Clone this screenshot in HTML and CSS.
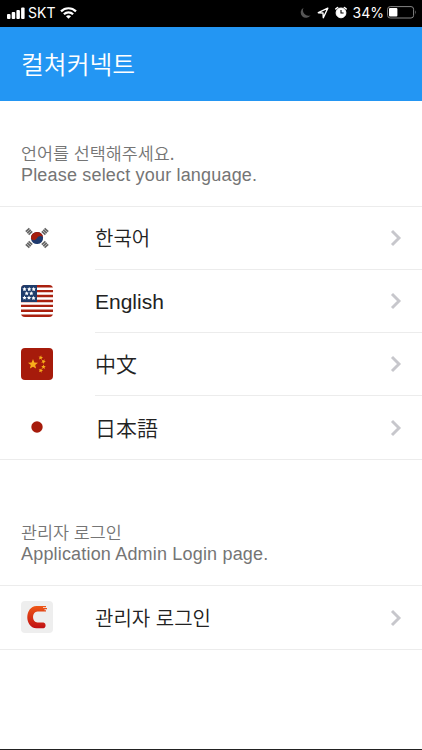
FILE: index.html
```html
<!DOCTYPE html>
<html lang="ko">

<head>
  <meta charset="UTF-8">
  <meta name="viewport" content="width=device-width, initial-scale=1.0">
  <title>컬쳐커넥트</title>
  <link rel="stylesheet" href="styles.css">
</head>

<body>
  <div class="status-bar">
    <div class="status-left">
      <svg class="signal" width="18" height="12" viewBox="0 0 18 12" fill="#fff">
        <rect x="0" y="7" width="3.5" height="5" rx="1" />
        <rect x="4.7" y="5" width="3.5" height="7" rx="1" />
        <rect x="9.4" y="3" width="3.5" height="9" rx="1" />
        <rect x="14.1" y="0.5" width="3.5" height="11.5" rx="1" />
      </svg>
      <span class="carrier">SKT</span>
      <svg class="wifi" width="17" height="12" viewBox="0 0 17 12" fill="none" stroke="#fff" stroke-width="2.2">
        <path d="M1 4.4C5.2 .2 11.8 .2 16 4.4" />
        <path d="M3.9 7.3C6.5 4.7 10.5 4.7 13.1 7.3" />
        <path d="M8.5 11.8L6 9.2C7.4 7.9 9.6 7.9 11 9.2Z" fill="#fff" stroke="none" />
      </svg>
    </div>
    <div class="status-right">
      <svg width="11" height="12" viewBox="0 0 11 12" fill="#555">
        <path d="M3.6 .8A5.3 5.3 0 1 0 10.6 8.2A5.4 5.4 0 0 1 3.6 .8Z" />
      </svg>
      <svg class="location" width="12" height="12" viewBox="0 0 12 12" fill="none" stroke="#fff" stroke-width="1.4" stroke-linejoin="round">
        <path d="M10.8 1.2L1.3 5.7L6 6L6.3 10.8Z" />
      </svg>
      <svg class="alarm" width="12" height="13" viewBox="0 0 12 13" fill="none" stroke="#fff">
        <circle cx="6" cy="6.9" r="4.9" fill="#fff" />
        <path d="M.9 2.9L2.6 1.5M11.1 2.9L9.4 1.5" stroke-width="1.6" stroke-linecap="round" />
        <path d="M6 4V7H8.6" stroke="#000" stroke-width="1.1" />
      </svg>
      <span class="percent">34%</span>
      <svg class="battery" width="30" height="13" viewBox="0 0 30 13">
        <rect x=".6" y=".6" width="26" height="11.4" rx="2.6" fill="none" stroke="#858585" />
        <rect x="2" y="2" width="8.4" height="8.6" rx="1" fill="#fff" />
        <path d="M28 4.2Q29.7 6.3 28 8.4Z" fill="#858585" />
      </svg>
    </div>
  </div>

  <header class="header">
    <h1>컬쳐커넥트</h1>
  </header>

  <section>
    <div class="section-title">
      <p class="ko">언어를 선택해주세요.</p>
      <p>Please select your language.</p>
    </div>
    <ul class="list">
      <li class="row">
        <svg class="icon" viewBox="0 0 32 32">
          <g transform="rotate(-5 16 16)">
            <circle cx="16" cy="16" r="6.1" fill="#1e3a6e" />
            <path d="M9.9 16A6.1 6.1 0 0 1 22.1 16C20.5 13.6 17.5 14 16 16C14.5 18.4 11.5 18.6 9.9 16Z" fill="#a51d0d" />
          </g>
          <g stroke="#666" stroke-width="1.7">
            <path d="M4.8 9.6L8.4 6.4M6.2 11.1L9.8 7.9M7.6 12.6L11.2 9.4" />
            <path d="M27.2 9.6L23.6 6.4M25.8 11.1L22.2 7.9M24.4 12.6L20.8 9.4" />
            <path d="M4.8 22.4L8.4 25.6M6.2 20.9L9.8 24.1M7.6 19.4L11.2 22.6" />
            <path d="M27.2 22.4L23.6 25.6M25.8 20.9L22.2 24.1M24.4 19.4L20.8 22.6" />
          </g>
        </svg>
        <div class="row-body">
          <span class="label ko">한국어</span>
          <svg class="chevron" viewBox="0 0 12 18"><path d="M2 2L9 9L2 16" /></svg>
        </div>
      </li>
      <li class="row">
        <svg class="icon rounded" viewBox="0 0 32 32">
          <rect width="32" height="32" fill="#fff" />
          <path d="M0 1.25H32M0 6.15H32M0 11.05H32M0 15.95H32M0 20.85H32M0 25.75H32M0 30.75H32" stroke="#a9200f" stroke-width="2.4" />
          <rect width="16" height="17" fill="#1f3c6b" />
          <g fill="#fff">
            <path id="star" d="M3.5 2L4.2 3.3L5.6 3.5L4.6 4.6L4.8 6L3.5 5.4L2.2 6L2.4 4.6L1.4 3.5L2.8 3.3Z" />
            <use href="#star" x="4.7" />
            <use href="#star" x="9.2" />
            <use href="#star" x="2.2" y="4.2" />
            <use href="#star" x="6.8" y="4.2" />
            <use href="#star" y="8.6" />
            <use href="#star" x="4.5" y="8.6" />
            <use href="#star" x="9" y="8.9" />
          </g>
        </svg>
        <div class="row-body">
          <span class="label">English</span>
          <svg class="chevron" viewBox="0 0 12 18"><path d="M2 2L9 9L2 16" /></svg>
        </div>
      </li>
      <li class="row">
        <svg class="icon rounded" viewBox="0 0 32 32">
          <rect width="32" height="32" fill="#a61b0b" />
          <g fill="#f8ae1b">
            <path id="cn-star" d="M12 11L13.4 14.4L17 14.7L14.2 17L15.1 20.6L12 18.7L8.9 20.6L9.8 17L7 14.7L10.6 14.4Z" />
            <use href="#cn-star" transform="translate(14.2 2.2) scale(.46) rotate(10 12 16)" />
            <use href="#cn-star" transform="translate(17 6) scale(.46) rotate(25 12 16)" />
            <use href="#cn-star" transform="translate(17 11.4) scale(.46)" />
            <use href="#cn-star" transform="translate(14.2 15) scale(.46) rotate(15 12 16)" />
          </g>
        </svg>
        <div class="row-body">
          <span class="label zh">中文</span>
          <svg class="chevron" viewBox="0 0 12 18"><path d="M2 2L9 9L2 16" /></svg>
        </div>
      </li>
      <li class="row">
        <svg class="icon" viewBox="0 0 32 32">
          <circle cx="16" cy="16" r="5.7" fill="#a61b0b" />
        </svg>
        <div class="row-body">
          <span class="label ja">日本語</span>
          <svg class="chevron" viewBox="0 0 12 18"><path d="M2 2L9 9L2 16" /></svg>
        </div>
      </li>
    </ul>
  </section>

  <section class="admin">
    <div class="section-title">
      <p class="ko">관리자 로그인</p>
      <p>Application Admin Login page.</p>
    </div>
    <ul class="list">
      <li class="row">
        <svg class="icon rounded" viewBox="0 0 32 32">
          <defs>
            <linearGradient id="magnet" x1="0" y1="0" x2="0" y2="1">
              <stop offset="0" stop-color="#ee5716" />
              <stop offset="1" stop-color="#c01014" />
            </linearGradient>
          </defs>
          <rect width="32" height="32" fill="#eee" />
          <path d="M15.5 5H25V6.2H22V7H26V8.3H23.5V9.2H25V10.4H16.5C10.5 10.8 10.5 21 16.5 21.5H22.5C25.3 22 25.3 27 22.5 27.3H15.5C3 26.5 3.5 5.5 15.5 5Z" fill="url(#magnet)" />
        </svg>
        <div class="row-body">
          <span class="label ko">관리자 로그인</span>
          <svg class="chevron" viewBox="0 0 12 18"><path d="M2 2L9 9L2 16" /></svg>
        </div>
      </li>
    </ul>
  </section>
</body>

</html>
```

FILE: styles.css
```css
* {
  margin: 0;
  padding: 0;
  box-sizing: border-box;
}

body {
  height: 750px;
  font-family: "Liberation Sans", "Noto Sans CJK KR", sans-serif;
  background: #ffffff;
  color: #222222;
  border-bottom: 1px solid #222222;
}

.status-bar {
  display: flex;
  justify-content: space-between;
  height: 27px;
  padding: 0 5px 2px 7px;
  background: #000000;
  color: #ffffff;
  font-family: Inter, sans-serif;
  font-size: 14px;
}

.status-left,
.status-right {
  display: flex;
  align-items: center;
}

.carrier {
  margin: 0 5px 0 3px;
}

.location {
  margin-left: 6px;
}

.alarm {
  margin: 0 6px;
}

.battery {
  margin-left: 3px;
}

.header {
  display: flex;
  align-items: center;
  height: 74px;
  padding: 0 21px 2px;
  background: #2396f3;
  color: #ffffff;
}

.header h1 {
  font-family: "Noto Sans CJK KR", sans-serif;
  font-size: 24.8px;
  font-weight: 350;
  line-height: 36px;
}

.section-title {
  padding: 41px 21px 20px;
  font-size: 18px;
  line-height: 22px;
  letter-spacing: 0.18px;
  color: #757575;
}

.section-title .ko {
  font-family: "Noto Sans CJK KR", sans-serif;
  font-size: 17.4px;
  font-weight: 350;
  letter-spacing: 0;
}

.list {
  list-style: none;
  border-top: 1px solid #ececec;
  border-bottom: 1px solid #ececec;
}

.row {
  display: flex;
  align-items: center;
  height: 63px;
  padding-left: 21px;
}

.icon {
  width: 32px;
  height: 32px;
  margin: 0 42px 1px 0;
}

.rounded {
  border-radius: 4px;
}

.row-body {
  flex: 1;
  display: flex;
  align-items: center;
  justify-content: space-between;
  height: 100%;
  padding-right: 20px;
  border-bottom: 1px solid #ececec;
}

.row:last-child .row-body {
  border-bottom: none;
}

.label {
  padding-top: 1px;
  font-size: 21px;
  line-height: 30px;
}

.label.ko {
  padding-top: 0;
  font-family: "Noto Sans CJK KR", sans-serif;
  font-size: 20px;
  font-weight: 350;
}

.label.zh,
.label.ja {
  padding: 0 0 2px;
  font-weight: 350;
}

.label.zh {
  font-family: "Noto Sans CJK SC", sans-serif;
}

.label.ja {
  font-family: "Noto Sans CJK JP", sans-serif;
}

.chevron {
  width: 12px;
  height: 18px;
  fill: none;
  stroke: #c7c7cc;
  stroke-width: 2.9;
}

.admin {
  padding-top: 20px;
}
```
